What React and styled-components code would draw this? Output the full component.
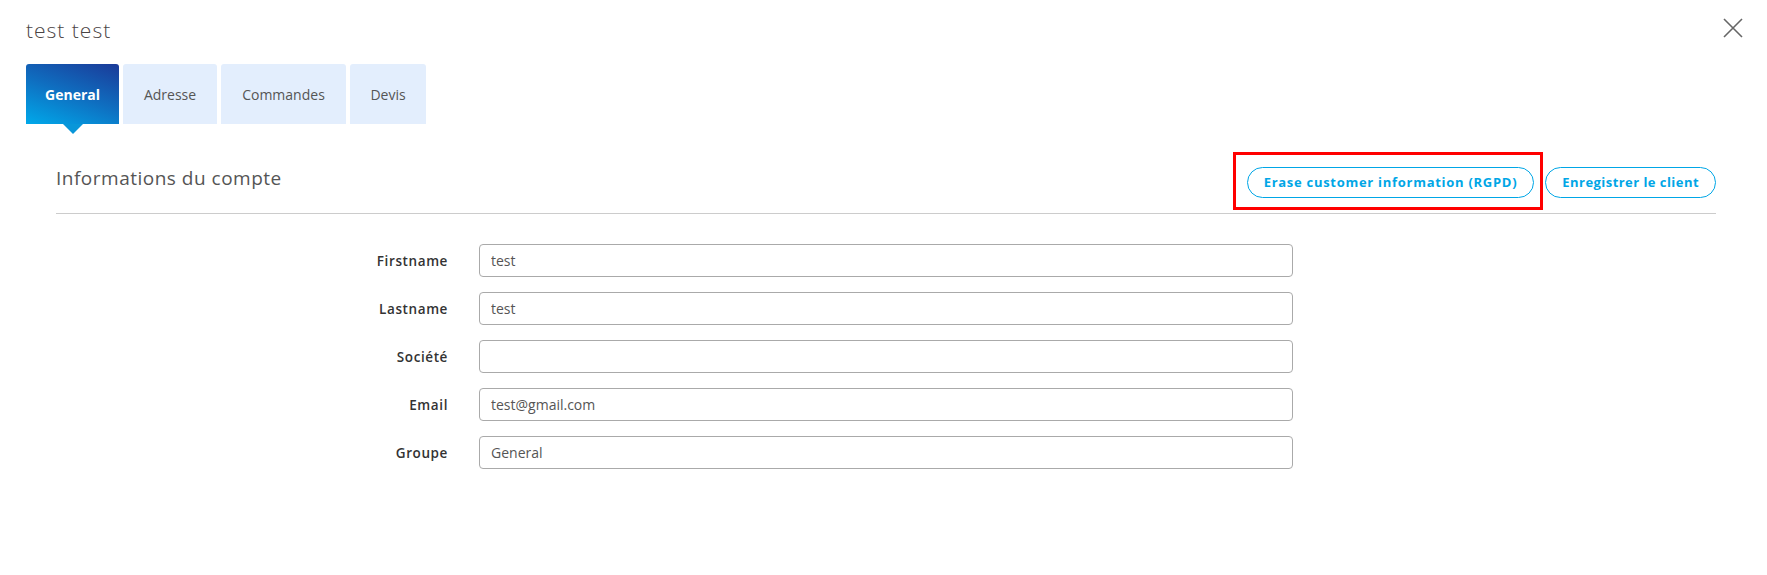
import React from "react";
import styled, { createGlobalStyle } from "styled-components";

const Global = createGlobalStyle`
  html, body { margin: 0; padding: 0; background: #fff; }
  body { font-family: "Open Sans", "Liberation Sans", sans-serif; color: #555; }
  * { box-sizing: border-box; }
`;

const Page = styled.div`
  width: 1767px;
  height: 575px;
  padding: 0 24px 0 26px;
  background: #fff;
`;

const Header = styled.header`
  display: flex;
  justify-content: space-between;
  align-items: flex-start;
  height: 64px;
  padding-top: 16px;
`;

const Title = styled.h1`
  margin: 0;
  font-family: "Open Sans", sans-serif;
  font-weight: 300;
  font-size: 21px;
  letter-spacing: 1px;
  line-height: 28px;
  color: #4a4444;
`;

const CloseButton = styled.button`
  width: 20px;
  height: 20px;
  margin-top: 2px;
  padding: 0;
  border: 0;
  background: none;
  cursor: pointer;
  display: flex;
  align-items: center;
  justify-content: center;
`;

const Tabs = styled.nav`
  display: flex;
  gap: 4px;
  height: 60px;
`;

const Tab = styled.button`
  position: relative;
  height: 60px;
  width: ${(p) => p.$w}px;
  padding: 0;
  border: 0;
  border-radius: 3px 3px 0 0;
  font-family: "Open Sans", sans-serif;
  font-size: 14px;
  font-weight: ${(p) => (p.$active ? 700 : 400)};
  color: ${(p) => (p.$active ? "#fff" : "#555")};
  background: ${(p) =>
    p.$active ? "linear-gradient(20deg, #00a9ea 0%, #0f6ec0 50%, #1b3a98 100%)" : "#e3eefd"};
  cursor: pointer;
  &::after {
    content: "";
    display: ${(p) => (p.$active ? "block" : "none")};
    position: absolute;
    left: 50%;
    bottom: -10px;
    transform: translateX(-50%);
    border-left: 10.5px solid transparent;
    border-right: 10.5px solid transparent;
    border-top: 10px solid #0896d9;
  }
`;

const Panel = styled.section`
  padding: 0 27px 0 30px;
`;

const SectionHeader = styled.div`
  display: flex;
  justify-content: space-between;
  align-items: center;
  height: 90px;
  padding-top: 43px;
  padding-bottom: 16px;
  border-bottom: 1px solid #cccccc;
`;

const SectionTitle = styled.h2`
  margin: 0;
  font-family: "Open Sans", sans-serif;
  font-weight: 400;
  font-size: 19px;
  letter-spacing: 0.5px;
  color: #555;
  margin-top: -9px;
`;

const Actions = styled.div`
  display: flex;
  gap: 11px;
`;

const Highlight = styled.div`
  position: relative;
  &::before {
    content: "";
    position: absolute;
    left: -14px;
    right: -9px;
    top: -15px;
    bottom: -12px;
    border: 3px solid #ff0000;
    pointer-events: none;
  }
`;

const PillButton = styled.button`
  height: 31px;
  padding: 0 16px;
  border: 1px solid #00a6e6;
  border-radius: 16px;
  background: #fff;
  color: #00a6e6;
  font-family: "Open Sans", sans-serif;
  font-weight: 700;
  font-size: 13px;
  letter-spacing: ${(p) => p.$spacing}px;
  cursor: pointer;
  white-space: nowrap;
`;

const Form = styled.form`
  display: grid;
  grid-template-columns: 392px 814px;
  column-gap: 31px;
  row-gap: 15px;
  padding-top: 30px;
  align-items: center;
`;

const Label = styled.label`
  text-align: right;
  font-family: "Open Sans", sans-serif;
  font-weight: 600;
  font-size: 13.5px;
  letter-spacing: 0.6px;
  color: #333;
`;

const Input = styled.input`
  height: 33px;
  width: 100%;
  padding: 0 11px;
  border: 1px solid #aaaaaa;
  border-radius: 4px;
  font-family: "Open Sans", sans-serif;
  font-size: 14px;
  color: #555;
  background: #fff;
  outline: none;
`;

const tabs = [
  { label: "General", w: 93, active: true },
  { label: "Adresse", w: 94 },
  { label: "Commandes", w: 125 },
  { label: "Devis", w: 76 },
];

const fields = [
  { id: "firstname", label: "Firstname", value: "test" },
  { id: "lastname", label: "Lastname", value: "test" },
  { id: "societe", label: "Société", value: "" },
  { id: "email", label: "Email", value: "test@gmail.com" },
  { id: "groupe", label: "Groupe", value: "General" },
];

export default function App() {
  return (
    <>
      <Global />
      <Page>
        <Header>
          <Title>test test</Title>
          <CloseButton aria-label="Fermer">
            <svg width="20" height="20" viewBox="0 0 20 20">
              <path d="M1 1 L19 19 M19 1 L1 19" stroke="#666" strokeWidth="1.6" fill="none" />
            </svg>
          </CloseButton>
        </Header>
        <Tabs>
          {tabs.map((t) => (
            <Tab key={t.label} $active={t.active} $w={t.w}>
              {t.label}
            </Tab>
          ))}
        </Tabs>
        <Panel>
          <SectionHeader>
            <SectionTitle>Informations du compte</SectionTitle>
            <Actions>
              <Highlight>
                <PillButton type="button" $spacing={0.72}>
                  Erase customer information (RGPD)
                </PillButton>
              </Highlight>
              <PillButton type="button" $spacing={0.45}>
                Enregistrer le client
              </PillButton>
            </Actions>
          </SectionHeader>
          <Form>
            {fields.map((f) => (
              <React.Fragment key={f.id}>
                <Label htmlFor={f.id}>{f.label}</Label>
                <Input id={f.id} defaultValue={f.value} readOnly />
              </React.Fragment>
            ))}
          </Form>
        </Panel>
      </Page>
    </>
  );
}
